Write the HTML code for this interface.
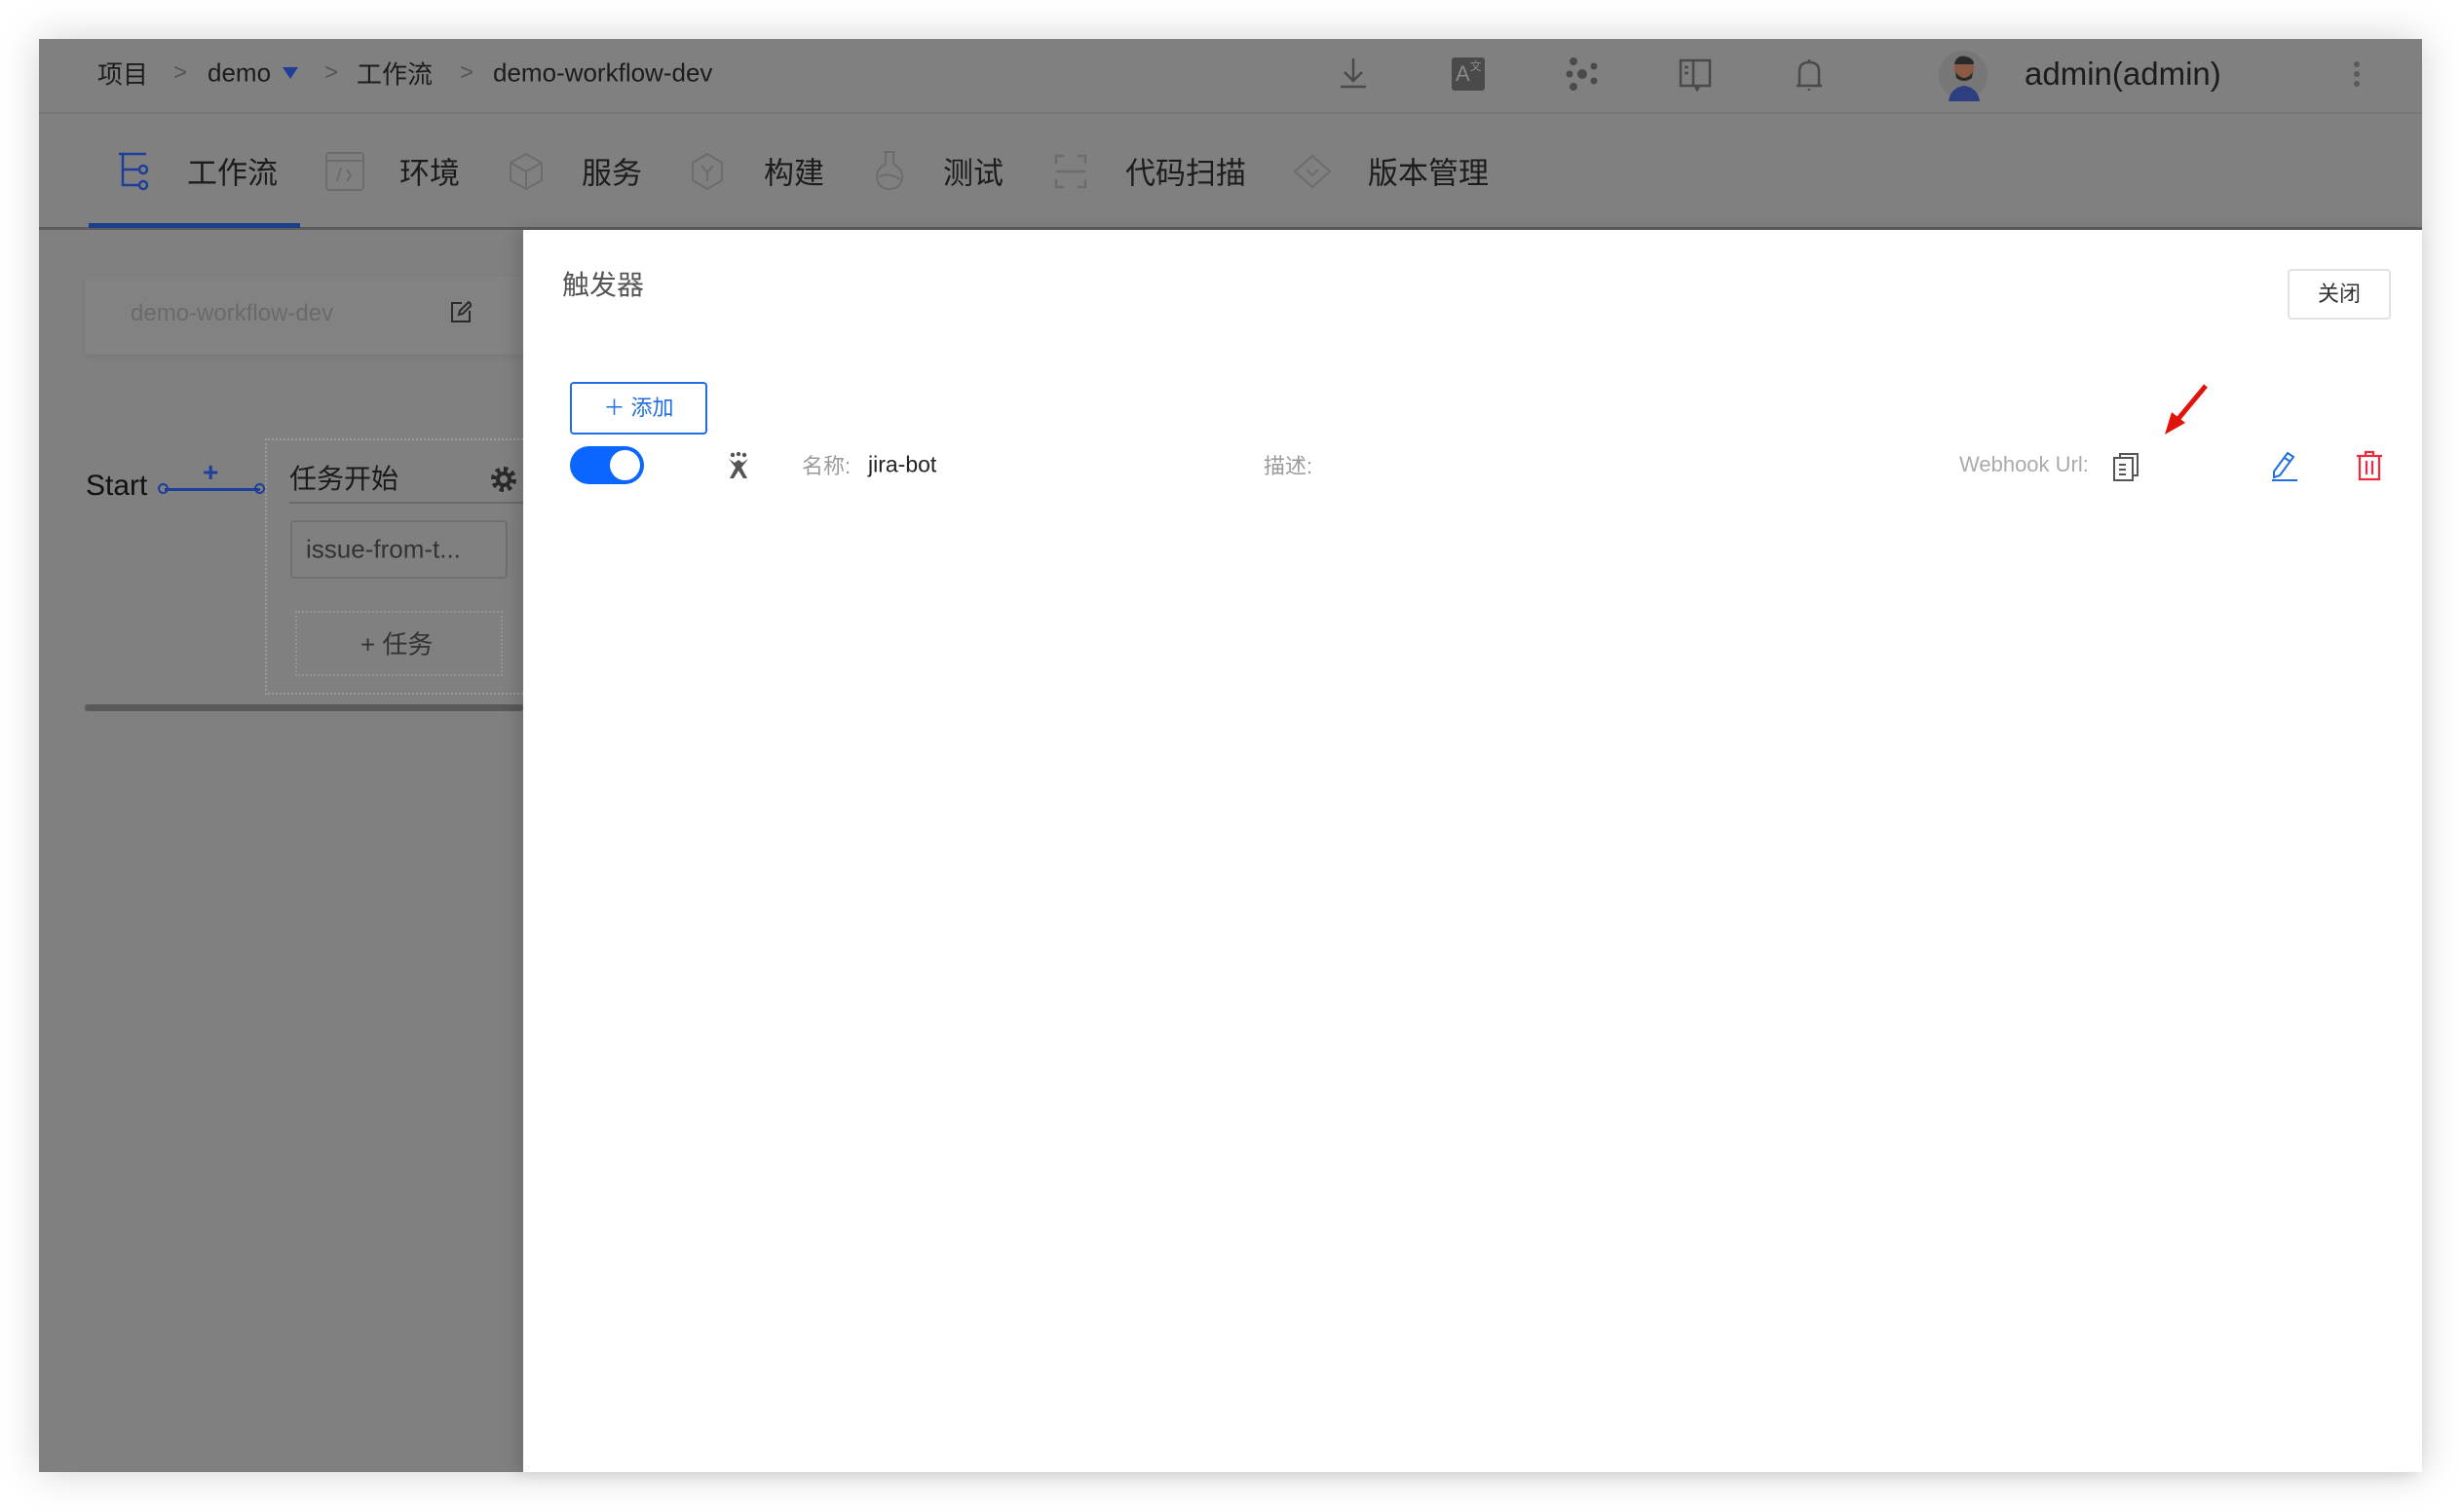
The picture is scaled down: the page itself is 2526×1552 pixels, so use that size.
<!DOCTYPE html>
<html><head><meta charset="utf-8"><style>
*{margin:0;padding:0;box-sizing:border-box}
body{width:2526px;height:1552px;background:#fff;position:relative;overflow:hidden;font-family:"Liberation Sans","Noto Sans CJK SC",sans-serif}
.a{position:absolute;white-space:nowrap}
.win{position:absolute;left:40px;top:40px;width:2446px;height:1471px;background:#808080;box-shadow:0 0 40px rgba(0,0,0,.18);overflow:hidden}
.mid{transform:translateY(-50%)}
</style></head><body>
<div class="win"></div>
<div class="a" style="left:40px;top:115px;width:2446px;height:2px;background:#767676"></div>
<div class="a mid" style="left:100px;top:75px;font-size:26px;color:#1c1c1c">项目</div>
<div class="a mid" style="left:178px;top:75px;font-size:24px;color:#555">&gt;</div>
<div class="a mid" style="left:213px;top:75px;font-size:26px;color:#1c1c1c">demo</div>
<svg class="a" style="left:290px;top:69px" width="16" height="12"><path d="M0 0H16L8 12Z" fill="#1d3f99"/></svg>
<div class="a mid" style="left:333px;top:75px;font-size:24px;color:#555">&gt;</div>
<div class="a mid" style="left:366px;top:75px;font-size:26px;color:#1c1c1c">工作流</div>
<div class="a mid" style="left:472px;top:75px;font-size:24px;color:#555">&gt;</div>
<div class="a mid" style="left:506px;top:75px;font-size:26px;color:#1c1c1c">demo-workflow-dev</div>
<svg class="a" style="left:1372px;top:58px" width="34" height="34" fill="none" stroke="#4a4a4a" stroke-width="2.5"><path d="M17 2V24M8 16L17 25L26 16M4 31H30"/></svg>
<div class="a" style="left:1490px;top:59px;width:34px;height:34px;background:#4a4a4a;border-radius:3px;color:#8a8a8a;font-size:22px;line-height:34px;padding-left:4px">A<span style="font-size:12px;vertical-align:top;line-height:18px">文</span></div>
<svg class="a" style="left:1606px;top:58px" width="36" height="36" fill="#4a4a4a"><circle cx="9" cy="5" r="4"/><circle cx="9" cy="31" r="4"/><circle cx="18" cy="18" r="5"/><circle cx="5" cy="18" r="3.5"/><circle cx="30" cy="10" r="3.5"/><circle cx="30" cy="25" r="3.5"/></svg>
<svg class="a" style="left:1722px;top:58px" width="36" height="36" fill="none" stroke="#4a4a4a" stroke-width="2.5"><path d="M3 4H16V30H3ZM16 4H33V30H16M18 30L20 34L22 30M7 11H11M7 17H11"/></svg>
<svg class="a" style="left:1840px;top:58px" width="34" height="38" fill="none" stroke="#4a4a4a" stroke-width="2.5"><path d="M17 3V6M7 30V15Q7 6 17 6Q27 6 27 15V30ZM4 30H30M17 33V35"/></svg>
<div class="a" style="left:1990px;top:52px;width:50px;height:50px;border-radius:50%;background:#777"></div>
<svg class="a" style="left:1996px;top:52px" width="40" height="52"><circle cx="20" cy="18" r="10" fill="#8a5a45"/><path d="M10 14Q12 4 22 6Q30 8 30 14" fill="#2a2a2a"/><path d="M11 22Q20 34 29 22L28 28Q20 34 12 28Z" fill="#2a2a2a"/><path d="M4 52Q6 38 20 36Q34 38 36 52Z" fill="#2d3f80"/></svg>
<div class="a mid" style="left:2078px;top:76px;font-size:33px;color:#1c1c1c">admin(admin)</div>
<svg class="a" style="left:2414px;top:62px" width="10" height="28" fill="#5a5a5a"><circle cx="5" cy="4" r="3"/><circle cx="5" cy="14" r="3"/><circle cx="5" cy="24" r="3"/></svg>
<div class="a" style="left:40px;top:233px;width:2446px;height:3px;background:#5c5c5c"></div>
<div class="a" style="left:91px;top:229px;width:217px;height:5px;background:#1c3f8c"></div>
<svg class="a" style="left:120px;top:156px" width="34" height="40" fill="none" stroke="#1d3f99" stroke-width="2.5"><path d="M2 2H30M6 2V34H22M6 18H22"/><circle cx="27" cy="18" r="4"/><circle cx="27" cy="34" r="4"/></svg>
<div class="a mid" style="left:192px;top:175px;font-size:31px;color:#1c1c1c">工作流</div>
<svg class="a" style="left:334px;top:156px" width="40" height="40" fill="none" stroke="#6c6c6c" stroke-width="2"><rect x="1" y="1" width="38" height="38" rx="3"/><path d="M1 9H39M16 16L12 30M22 18L26 24L22 30M14 20"/></svg>
<div class="a mid" style="left:410px;top:175px;font-size:31px;color:#1c1c1c">环境</div>
<svg class="a" style="left:522px;top:156px" width="36" height="40" fill="none" stroke="#6c6c6c" stroke-width="2"><path d="M18 2L34 11V29L18 38L2 29V11ZM18 20L34 11M18 20L2 11M18 20V38"/></svg>
<div class="a mid" style="left:597px;top:175px;font-size:31px;color:#1c1c1c">服务</div>
<svg class="a" style="left:709px;top:156px" width="34" height="40" fill="none" stroke="#6c6c6c" stroke-width="2"><path d="M17 2L32 11V29L17 38L2 29V11ZM11 14L17 21L23 14M17 21V30"/></svg>
<div class="a mid" style="left:784px;top:175px;font-size:31px;color:#1c1c1c">构建</div>
<svg class="a" style="left:896px;top:154px" width="34" height="42" fill="none" stroke="#6c6c6c" stroke-width="2"><path d="M11 2H23M13 2V14Q3 20 4 29Q6 40 17 40Q28 40 30 29Q31 20 21 14V2M6 28Q14 22 28 30"/></svg>
<div class="a mid" style="left:968px;top:175px;font-size:31px;color:#1c1c1c">测试</div>
<svg class="a" style="left:1082px;top:158px" width="34" height="36" fill="none" stroke="#6c6c6c" stroke-width="2.5"><path d="M2 10V2H10M24 2H32V10M2 26V34H10M24 34H32V26M2 18H32"/></svg>
<div class="a mid" style="left:1155px;top:175px;font-size:31px;color:#1c1c1c">代码扫描</div>
<svg class="a" style="left:1327px;top:158px" width="40" height="36" fill="none" stroke="#6c6c6c" stroke-width="2"><path d="M20 2L38 18L20 34L2 18ZM14 16L20 22L26 16"/></svg>
<div class="a mid" style="left:1404px;top:175px;font-size:31px;color:#1c1c1c">版本管理</div>
<div class="a" style="left:87px;top:284px;width:450px;height:80px;background:#828282;box-shadow:0 2px 6px rgba(0,0,0,.08)"></div>
<div class="a mid" style="left:134px;top:322px;font-size:24px;color:#6a6a6a">demo-workflow-dev</div>
<svg class="a" style="left:462px;top:308px" width="22" height="24" fill="none" stroke="#2a2a2a" stroke-width="2"><path d="M12 3H2V22H20V11M9 15L10 11L19 2L22 5L13 14Z"/></svg>
<div class="a mid" style="left:88px;top:499px;font-size:30px;color:#111">Start</div>
<div class="a" style="left:169px;top:501px;width:98px;height:3px;background:#1d3f99"></div>
<div class="a" style="left:162px;top:496px;width:11px;height:11px;border:2px solid #1d3f99;border-radius:50%"></div>
<div class="a" style="left:261px;top:496px;width:11px;height:11px;border:2px solid #1d3f99;border-radius:50%"></div>
<div class="a mid" style="left:208px;top:485px;font-size:28px;color:#1d3f99;font-weight:bold">+</div>
<div class="a" style="left:272px;top:450px;width:300px;height:263px;border:2px dotted #9a9a9a"></div>
<div class="a mid" style="left:297px;top:490px;font-size:28px;color:#1a1a1a">任务开始</div>
<svg class="a" style="left:503px;top:478px" width="28" height="28"><circle cx="14" cy="14" r="10" fill="none" stroke="#2a2a2a" stroke-width="6" stroke-dasharray="4 3.8"/><circle cx="14" cy="14" r="8" fill="#2a2a2a"/><circle cx="14" cy="14" r="4" fill="#808080"/></svg>
<div class="a" style="left:297px;top:515px;width:240px;height:2px;background:#6a6a6a"></div>
<div class="a" style="left:298px;top:534px;width:223px;height:60px;border:2px solid #707070;border-radius:4px"></div>
<div class="a mid" style="left:314px;top:564px;font-size:26px;color:#333">issue-from-t...</div>
<div class="a" style="left:303px;top:627px;width:213px;height:67px;border:2px dotted #959595"></div>
<div class="a mid" style="left:370px;top:660px;font-size:26px;color:#333">+ 任务</div>
<div class="a" style="left:87px;top:723px;width:450px;height:7px;background:#5a5a5a;border-radius:3px"></div>
<div class="a" style="left:537px;top:236px;width:1949px;height:1275px;background:#fff;box-shadow:-6px 0 16px rgba(0,0,0,.15)"></div>
<div class="a mid" style="left:577px;top:291px;font-size:28px;color:#555">触发器</div>
<div class="a" style="left:2348px;top:276px;width:106px;height:52px;border:2px solid #e2e2e2;border-radius:4px;font-size:22px;color:#333;text-align:center;line-height:48px">关闭</div>
<div class="a" style="left:585px;top:392px;width:141px;height:54px;border:2px solid #1f6fe0;border-radius:4px;font-size:22px;color:#1f6fe0;text-align:center;line-height:50px">＋ 添加</div>
<div class="a" style="left:585px;top:458px;width:76px;height:39px;background:#0a66ff;border-radius:20px"></div>
<div class="a" style="left:626px;top:462px;width:31px;height:31px;background:#fff;border-radius:50%"></div>
<svg class="a" style="left:746px;top:464px" width="24" height="28" fill="#555"><circle cx="6" cy="3" r="2.2"/><circle cx="12" cy="2" r="2.2"/><circle cx="18" cy="3" r="2.2"/><path d="M2 7L8 11L12 8L16 11L22 7L15 16L21 27H17L12 19L7 27H3L9 16Z"/></svg>
<div class="a mid" style="left:823px;top:477px;font-size:22px;color:#9a9a9a">名称:</div>
<div class="a mid" style="left:891px;top:477px;font-size:23px;color:#222">jira-bot</div>
<div class="a mid" style="left:1297px;top:477px;font-size:22px;color:#9a9a9a">描述:</div>
<div class="a mid" style="left:2011px;top:477px;font-size:22px;color:#aaa">Webhook Url:</div>
<svg class="a" style="left:2167px;top:464px" width="30" height="30" fill="none" stroke="#555" stroke-width="2"><path d="M9 6V2H27V24H22M3 6H22V29H3ZM8 13H15M8 18H15M8 23H15"/></svg>
<svg class="a" style="left:2218px;top:394px" width="50" height="55"><path d="M46 2L16 38" stroke="#e0140c" stroke-width="5"/><path d="M4 52L11 29L25 40Z" fill="#e0140c"/></svg>
<svg class="a" style="left:2330px;top:462px" width="30" height="32" fill="none" stroke="#1f6fe0" stroke-width="2"><path d="M18 3L24 7L10 26L4 28L4 22ZM15 8L21 12M2 31H28"/></svg>
<svg class="a" style="left:2418px;top:462px" width="28" height="32" fill="none" stroke="#f0293e" stroke-width="2.2"><path d="M1 6H27M10 6V2H18V6M4 6V30H24V6M11 11V25M17 11V25"/></svg>
</body></html>
